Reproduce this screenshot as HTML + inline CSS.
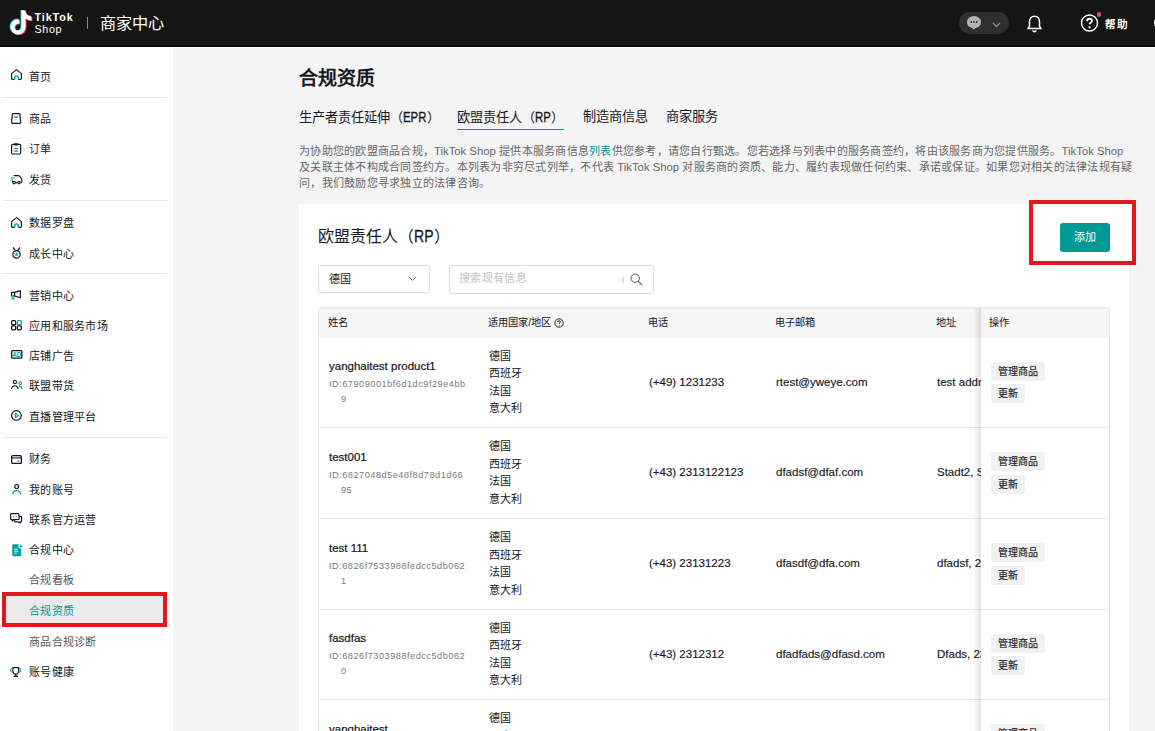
<!DOCTYPE html>
<html lang="zh-CN"><head><meta charset="utf-8">
<style>
*{box-sizing:border-box;margin:0;padding:0}
html,body{width:1155px;height:731px;overflow:hidden;background:#f4f4f4;font-family:"Liberation Sans",sans-serif;color:#161823}
.abs{position:absolute;white-space:nowrap}
.tab{top:107.8px;font-size:13.2px;line-height:18px;color:#161823;font-weight:500}
.tab b{font-weight:normal;display:inline-block;font-size:14px;-webkit-text-stroke:.35px #161823;transform:scaleX(.81);transform-origin:0 50%}
.tab b.e{margin-right:-5.3px}
.tab b.r{margin-right:-3.6px}
.lat{letter-spacing:0;font-size:11.3px}
.hdr{position:absolute;left:0;top:0;width:1155px;height:47px;background:#151515;border-bottom:1px solid #000}
.side{position:absolute;left:0;top:47px;width:173px;height:684px;background:#fff}
.wstrip{position:absolute;left:173px;top:47px;width:982px;height:1px;background:#fff}
.si{position:absolute;left:29px;font-size:11px;letter-spacing:.3px;line-height:14px;color:#161823;white-space:nowrap;font-weight:500}
.sub{color:#555}
.ic{position:absolute;left:10px;width:12px;height:12px}
.dv{position:absolute;left:3px;width:164px;height:1px;background:#e6e6e6}
.card{position:absolute;left:299px;top:204px;width:830px;height:540px;background:#fff;border-radius:2px}
.th{position:absolute;top:0;margin-left:-.7px;font-size:10.2px;line-height:30px;color:#161823;white-space:nowrap;font-weight:500}
.row{position:absolute;left:0;width:662px;height:91px;border-bottom:1px solid #e8e8e8}
.fx{position:absolute;left:662px;width:130px;background:#fff;border-bottom:1px solid #e8e8e8}
.fx .btn{left:10px}
.med{-webkit-text-stroke:.25px currentColor}
.nm{position:absolute;left:10px;font-size:11.5px;line-height:16px;color:#161823;white-space:nowrap;-webkit-text-stroke:.22px #161823}
.id{position:absolute;left:10px;font-size:9.2px;letter-spacing:.5px;color:#7a7a7a;white-space:nowrap;line-height:14px}
.ct{position:absolute;left:170px;font-size:11px;line-height:17.5px;color:#161823;font-weight:500}
.tx{position:absolute;font-size:11.5px;line-height:16px;color:#161823;white-space:nowrap;-webkit-text-stroke:.15px #161823}
.btn{position:absolute;height:19px;background:#f1f1f2;border-radius:3px;font-size:10px;line-height:19px;padding:0 6.8px;color:#161823;white-space:nowrap;font-weight:500;-webkit-text-stroke:.15px #161823}
</style></head><body>
<!-- HEADER -->
<div class="hdr">
  <svg class="abs" style="left:9px;top:10px" width="24" height="25" viewBox="0 0 24 24">
    <path fill="#25f4ee" transform="translate(-0.9,-0.6)" d="M12.525.02c1.31-.02 2.61-.01 3.91-.02.08 1.53.63 3.090 1.75 4.17 1.12 1.11 2.7 1.62 4.24 1.79v4.03c-1.44-.05-2.890-.35-4.2-.97-.57-.26-1.1-.59-1.62-.93-.01 2.92.01 5.84-.02 8.75-.08 1.4-.54 2.79-1.35 3.94-1.31 1.92-3.58 3.17-5.91 3.21-1.43.08-2.86-.31-4.08-1.03-2.02-1.19-3.44-3.37-3.65-5.71-.02-.5-.03-1-.01-1.49.18-1.9 1.12-3.72 2.58-4.96 1.66-1.44 3.98-2.13 6.15-1.72.02 1.48-.04 2.96-.04 4.44-.99-.32-2.15-.23-3.02.37-.63.41-1.11 1.04-1.36 1.75-.21.51-.15 1.07-.14 1.610.24 1.64 1.82 3.02 3.5 2.87 1.12-.01 2.19-.66 2.77-1.61.19-.33.4-.67.41-1.06.1-1.79.06-3.570.07-5.36.01-4.03-.01-8.05.02-12.07z"/>
    <path fill="#fe2c55" transform="translate(0.9,0.7)" d="M12.525.02c1.31-.02 2.61-.01 3.91-.02.08 1.53.63 3.090 1.75 4.17 1.12 1.11 2.7 1.62 4.24 1.79v4.03c-1.44-.05-2.890-.35-4.2-.97-.57-.26-1.1-.59-1.62-.93-.01 2.92.01 5.84-.02 8.75-.08 1.4-.54 2.79-1.35 3.940-1.31 1.92-3.58 3.17-5.91 3.21-1.43.08-2.86-.31-4.08-1.03-2.02-1.19-3.44-3.37-3.65-5.71-.02-.5-.03-1-.01-1.49.18-1.9 1.12-3.72 2.58-4.96 1.66-1.44 3.98-2.13 6.15-1.72.02 1.48-.04 2.96-.04 4.44-.99-.32-2.15-.23-3.02.37-.63.41-1.11 1.04-1.36 1.75-.21.51-.15 1.07-.14 1.61.24 1.64 1.82 3.02 3.5 2.87 1.12-.01 2.19-.66 2.77-1.61.19-.33.4-.67.41-1.06.1-1.79.06-3.57.07-5.36.01-4.03-.01-8.05.02-12.07z"/>
    <path fill="#fff" d="M12.525.02c1.31-.02 2.61-.01 3.91-.02.08 1.53.63 3.09 1.75 4.17 1.12 1.11 2.7 1.62 4.24 1.79v4.03c-1.44-.05-2.89-.35-4.2-.97-.57-.26-1.1-.59-1.62-.93-.01 2.92.01 5.84-.02 8.75-.08 1.4-.54 2.79-1.35 3.94-1.31 1.92-3.58 3.17-5.91 3.21-1.43.08-2.86-.31-4.08-1.03-2.02-1.19-3.44-3.37-3.65-5.71-.02-.5-.03-1-.01-1.49.18-1.9 1.12-3.72 2.58-4.96 1.66-1.44 3.98-2.130 6.15-1.72.02 1.48-.04 2.96-.04 4.44-.99-.32-2.15-.23-3.02.37-.63.41-1.11 1.04-1.36 1.75-.21.51-.15 1.07-.14 1.61.24 1.64 1.82 3.02 3.5 2.87 1.12-.01 2.19-.66 2.77-1.61.19-.33.4-.67.41-1.06.1-1.79.06-3.57.07-5.36.01-4.03-.01-8.05.02-12.07z"/>
  </svg>
  <div class="abs" style="left:34.5px;top:11px;font-size:10.8px;font-weight:bold;color:#fff;line-height:12px;letter-spacing:0.9px">TikTok</div>
  <div class="abs" style="left:34.5px;top:22.5px;font-size:10.8px;color:#fff;line-height:12px;letter-spacing:0.6px">Shop</div>
  <div class="abs" style="left:87px;top:17px;width:1px;height:12px;background:#8a8a8a"></div>
  <div class="abs" style="left:100px;top:13px;font-size:16.2px;line-height:20px;color:#fff">商家中心</div>
  <!-- right -->
  <div class="abs" style="left:959px;top:12px;width:50px;height:22px;border-radius:11px;background:#2f2f2f"></div>
  <svg class="abs" style="left:966px;top:15px" width="16" height="16" viewBox="0 0 16 16">
    <ellipse cx="8" cy="7.2" rx="7" ry="6.2" fill="#b4b4b4"/><path d="M6.5 12.5l1 2.4 2.5-2.6z" fill="#b4b4b4"/>
    <circle cx="5.2" cy="7" r=".9" fill="#2f2f2f"/><circle cx="8" cy="7" r=".9" fill="#2f2f2f"/><circle cx="10.8" cy="7" r=".9" fill="#2f2f2f"/>
  </svg>
  <svg class="abs" style="left:992px;top:22px" width="9" height="6" viewBox="0 0 9 6"><path d="M1 1l3.5 3.5L8 1" stroke="#9a9a9a" stroke-width="1.1" fill="none"/></svg>
  <svg class="abs" style="left:1025px;top:14px" width="19" height="20" viewBox="0 0 19 20">
    <path d="M9.5 2.2c-3 0-5 2.3-5 5.3v4.8l-1.6 2.3h13.2l-1.6-2.3V7.5c0-3-2-5.3-5-5.3z" stroke="#fff" stroke-width="1.5" fill="none" stroke-linejoin="round"/>
    <path d="M7 16.6c.2 1.1 1.2 1.9 2.5 1.9s2.3-.8 2.5-1.9z" fill="#fff"/>
  </svg>
  <svg class="abs" style="left:1080px;top:12.5px" width="20" height="20" viewBox="0 0 20 20">
    <circle cx="9.5" cy="10" r="8" stroke="#fff" stroke-width="1.4" fill="none"/>
    <path d="M7.1 8.2c0-1.5 1.1-2.5 2.4-2.5s2.4.9 2.4 2.2c0 1.8-2.4 1.8-2.4 3.4" stroke="#fff" stroke-width="1.9" fill="none"/>
    <circle cx="9.5" cy="14.3" r="1.15" fill="#fff"/>
  </svg>
  <div class="abs" style="left:1096.9px;top:12px;width:4.2px;height:4.9px;border-radius:2.3px;background:#ea4a5e"></div>
  <div class="abs" style="left:1105px;top:16.8px;font-size:10.6px;letter-spacing:.7px;line-height:14px;color:#fff;font-weight:bold">帮助</div>
  <div class="abs" style="left:1153.5px;top:14px;width:18px;height:18px;border-radius:9px;background:#fff"></div>
</div>

<!-- SIDEBAR -->
<div class="side"></div><div class="wstrip"></div>
<div class="dv" style="top:96.9px"></div>
<div class="dv" style="top:199.9px"></div>
<div class="dv" style="top:273.0px"></div>
<div class="dv" style="top:436.8px"></div>
<svg class="abs" style="left:11px;top:69px;overflow:visible" width="11" height="11" viewBox="0 0 11 11"><path d="M3.6 10.4H1.4a.8.8 0 01-.8-.8V4.6L5.5.6l4.9 4v5a.8.8 0 01-.8.8H7.4" stroke="#161823" stroke-width="1.2" fill="none" stroke-linejoin="round"/><path d="M3.7 10.8V8.7a1.8 1.8 0 013.6 0v2.1" stroke="#00a3a0" stroke-width="1.4" fill="none"/></svg>
<div class="si" style="top:69.5px">首页</div>
<svg class="abs" style="left:11px;top:113px;overflow:visible" width="10.3" height="10.5" viewBox="0 0 10.3 10.5"><path d="M2 .6h6.3a.6.6 0 01.6.5l.8 8.4a.9.9 0 01-.9.9H1.5a.9.9 0 01-.9-.9l.8-8.4a.6.6 0 01.6-.5z" stroke="#161823" stroke-width="1.2" fill="none"/><path d="M3.3 2.9c.4 1 1.1 1.5 1.85 1.5s1.45-.5 1.85-1.5" stroke="#00a3a0" stroke-width="1.2" fill="none"/></svg>
<div class="si" style="top:111.5px">商品</div>
<svg class="abs" style="left:11px;top:143.4px;overflow:visible" width="10.3" height="11.6" viewBox="0 0 10.3 11.6"><rect x=".6" y="1.4" width="9.1" height="9.6" rx="1.3" stroke="#161823" stroke-width="1.2" fill="none"/><rect x="3" y=".3" width="4.3" height="2.2" rx="1" fill="#161823"/><path d="M3.2 5.6h3.9M3.2 8.1h3.9" stroke="#00a3a0" stroke-width="1.1"/></svg>
<div class="si" style="top:142.0px">订单</div>
<svg class="abs" style="left:9.7px;top:174.5px;overflow:visible" width="12.5" height="9.3" viewBox="0 0 12.5 9.3"><path d="M3.6 .6H8.4a1.5 1.5 0 011.2.6l1.9 2.5a1.5 1.5 0 01.3.9V7a.6.6 0 01-.6.6h-.6M7.6 7.6H5.4M2.7 7.6V5.8" stroke="#161823" stroke-width="1.1" fill="none" stroke-linejoin="round"/><circle cx="4.1" cy="7.6" r="1.25" stroke="#161823" stroke-width="1.1" fill="#fff"/><circle cx="9" cy="7.6" r="1.25" stroke="#161823" stroke-width="1.1" fill="#fff"/><path d="M1 3h3.8M.3 5h3" stroke="#00a3a0" stroke-width="1.1"/></svg>
<div class="si" style="top:172.5px">发货</div>
<svg class="abs" style="left:11px;top:217px;overflow:visible" width="11" height="11" viewBox="0 0 11 11"><path d="M3.6 10.4H1.4a.8.8 0 01-.8-.8V4.6L5.5.6l4.9 4v5a.8.8 0 01-.8.8H7.4" stroke="#161823" stroke-width="1.2" fill="none" stroke-linejoin="round"/><path d="M3.7 10.8V8.7a1.8 1.8 0 013.6 0v2.1" stroke="#00a3a0" stroke-width="1.4" fill="none"/></svg>
<div class="si" style="top:216.0px">数据罗盘</div>
<svg class="abs" style="left:12px;top:246.5px;overflow:visible" width="9" height="11.7" viewBox="0 0 9 11.7"><path d="M1 .4l2 2.8M8 .4L6 3.2" stroke="#161823" stroke-width="1.2"/><circle cx="4.5" cy="7.4" r="3.7" stroke="#161823" stroke-width="1.2" fill="none"/><path d="M4.5 4.9L5.15 6.5L6.85 6.6L5.5 7.7L5.95 9.4L4.5 8.45L3.05 9.4L3.5 7.7L2.15 6.6L3.85 6.5Z" fill="#00a3a0"/></svg>
<div class="si" style="top:246.5px">成长中心</div>
<svg class="abs" style="left:11px;top:290px;overflow:visible" width="10" height="9.7" viewBox="0 0 10 9.7"><path d="M.6 2.4h3v3.6h-3z" stroke="#161823" stroke-width="1.2" fill="none" stroke-linejoin="round"/><path d="M3.6 2.4L9.4.6v7.2L3.6 6" stroke="#161823" stroke-width="1.2" fill="none" stroke-linejoin="round"/><path d="M1.3 6.2v2.3a.85.85 0 001.7 0V6.2" stroke="#00a3a0" stroke-width="1.1" fill="none"/></svg>
<div class="si" style="top:288.5px">营销中心</div>
<svg class="abs" style="left:11px;top:320px;overflow:visible" width="11" height="10.5" viewBox="0 0 11 10.5"><rect x=".65" y=".65" width="4" height="4" rx="1" stroke="#161823" stroke-width="1.3" fill="none"/><rect x="6.35" y=".65" width="4" height="4" rx="1" stroke="#00a3a0" stroke-width="1.3" fill="none"/><rect x=".65" y="5.85" width="4" height="4" rx="1" stroke="#161823" stroke-width="1.3" fill="none"/><rect x="6.35" y="5.85" width="4" height="4" rx="1" stroke="#161823" stroke-width="1.3" fill="none"/></svg>
<div class="si" style="top:318.5px">应用和服务市场</div>
<svg class="abs" style="left:10.5px;top:350px;overflow:visible" width="11.5" height="8.8" viewBox="0 0 11.5 8.8"><rect x=".65" y=".65" width="10.2" height="7.5" rx=".9" stroke="#161823" stroke-width="1.3" fill="none"/><text x="5.75" y="6.7" font-size="6.3" font-family="Liberation Sans" font-weight="bold" text-anchor="middle" fill="#00a3a0">AD</text></svg>
<div class="si" style="top:348.8px">店铺广告</div>
<svg class="abs" style="left:10.5px;top:380px;overflow:visible" width="11.5" height="9.5" viewBox="0 0 11.5 9.5"><circle cx="3.9" cy="2.1" r="1.65" stroke="#161823" stroke-width="1.1" fill="none"/><path d="M.5 9c.4-2.1 1.7-3.3 3.4-3.3S6.9 6.9 7.3 9" stroke="#161823" stroke-width="1.1" fill="none"/><circle cx="9.3" cy="3.1" r="1.4" stroke="#00a3a0" stroke-width="1.1" fill="none"/><path d="M8 5.9c1.6.1 2.6 1.2 3 3" stroke="#00a3a0" stroke-width="1.1" fill="none"/></svg>
<div class="si" style="top:379.1px">联盟带货</div>
<svg class="abs" style="left:10.5px;top:409.6px;overflow:visible" width="10.8" height="10.9" viewBox="0 0 10.8 10.9"><circle cx="5.4" cy="5.45" r="4.8" stroke="#161823" stroke-width="1.2" fill="none"/><path d="M4.3 3.3v4.3l3.1-2.15z" stroke="#00a3a0" stroke-width="1.1" fill="none" stroke-linejoin="round"/></svg>
<div class="si" style="top:409.5px">直播管理平台</div>
<svg class="abs" style="left:11px;top:454.8px;overflow:visible" width="11" height="9" viewBox="0 0 11 9"><rect x=".65" y=".65" width="9.7" height="7.7" rx="1.2" stroke="#161823" stroke-width="1.3" fill="none"/><path d="M1 2.9h9" stroke="#161823" stroke-width="1.1"/><path d="M6.2 6.1h2.1" stroke="#00a3a0" stroke-width="1.2"/></svg>
<div class="si" style="top:452.2px">财务</div>
<svg class="abs" style="left:11.8px;top:484px;overflow:visible" width="9.4" height="11" viewBox="0 0 9.4 11"><circle cx="4.7" cy="2.6" r="2" stroke="#161823" stroke-width="1.2" fill="none"/><path d="M.6 10.4c.6-2.4 2.1-3.7 4.1-3.7s3.5 1.3 4.1 3.7" stroke="#00a3a0" stroke-width="1.2" fill="none"/></svg>
<div class="si" style="top:482.5px">我的账号</div>
<svg class="abs" style="left:10px;top:513px;overflow:visible" width="12.2" height="10" viewBox="0 0 12.2 10"><path d="M1.4.6h6.9a.8.8 0 01.8.8v4.3a.8.8 0 01-.8.8H4L2.2 8V6.5h-.8a.8.8 0 01-.8-.8V1.4a.8.8 0 01.8-.8z" stroke="#161823" stroke-width="1.2" fill="none" stroke-linejoin="round"/><path d="M9.1 3.3h1.7a.8.8 0 01.8.8v4a.8.8 0 01-.8.8h-.6v1l-1.6-1H5.4a.8.8 0 01-.8-.8V6.5" stroke="#161823" stroke-width="1.2" fill="none" stroke-linejoin="round"/><path d="M3 3.3h4.2" stroke="#00a3a0" stroke-width="1" stroke-dasharray=".9 .55"/></svg>
<div class="si" style="top:513.0px">联系官方运营</div>
<svg class="abs" style="left:11.5px;top:544px;overflow:visible" width="10.7" height="12.3" viewBox="0 0 10.7 12.3"><path d="M1.4.3h5.6L9.3 2.6v8.4a1.2 1.2 0 01-1.2 1.2H1.4A1.2 1.2 0 01.2 11V1.5A1.2 1.2 0 011.4.3z" fill="#00a3a0"/><circle cx="8.9" cy="2.3" r="2.5" fill="#fff"/><path d="M8.9.1l.6 1.6 1.6.6-1.6.6-.6 1.6-.6-1.6-1.6-.6 1.6-.6z" fill="#00a3a0"/><path d="M2.1 5.2h3.6M2.1 7.2h4.2M2.1 9.2h2.6" stroke="#fff" stroke-width="1" opacity=".85"/></svg>
<div class="si" style="top:543.3px">合规中心</div>
<div class="si sub" style="top:573.4px">合规看板</div>
<div class="abs" style="left:3px;top:594px;width:162px;height:31px;background:#eaeaea"></div>
<div class="si" style="top:603.6px;color:#009995">合规资质</div>
<div class="si sub" style="top:634.7px">商品合规诊断</div>
<svg class="abs" style="left:10.3px;top:667px;overflow:visible" width="11.5" height="10" viewBox="0 0 11.5 10"><path d="M2.9.6h5.7v3.7a2.85 2.85 0 01-5.7 0z" stroke="#161823" stroke-width="1.2" fill="none"/><path d="M2.4 1.2C1.2 1.4.6 2.2.6 3.2s.6 1.8 1.8 2M9.1 1.2c1.2.2 1.8 1 1.8 2s-.6 1.8-1.8 2" stroke="#00a3a0" stroke-width="1.1" fill="none"/><path d="M5.75 7v1.8" stroke="#161823" stroke-width="1.2"/><path d="M4 9.2h3.5" stroke="#161823" stroke-width="1.4" stroke-linecap="round"/></svg>
<div class="si" style="top:664.5px">账号健康</div>
<div class="abs" style="left:1.6px;top:592px;width:165.5px;height:34.6px;border:4px solid #e3171c"></div>

<!-- MAIN -->
<div class="abs" style="left:299px;top:67px;font-size:19px;line-height:24px;font-weight:bold;color:#161823">合规资质</div>
<div class="abs tab" style="left:299px">生产者责任延伸（<b class="e">EPR</b>）</div>
<div class="abs tab" style="left:457px">欧盟责任人（<b class="r">RP</b>）</div>
<div class="abs" style="left:457px;top:128.6px;width:107px;height:1.7px;background:#009995"></div>
<div class="abs tab" style="left:583px">制造商信息</div>
<div class="abs tab" style="left:666px">商家服务</div>
<div class="abs" style="left:299px;top:143px;font-size:11px;letter-spacing:.25px;line-height:16px;color:#666">为协助您的欧盟商品合规，<span class="lat">TikTok Shop</span> 提供本服务商信息<span style="color:#009995">列表</span>供您参考，请您自行甄选。您若选择与列表中的服务商签约，将由该服务商为您提供服务。<span class="lat">TikTok Shop</span><br>及关联主体不构成合同签约方。本列表为非穷尽式列举，不代表 <span class="lat">TikTok Shop</span> 对服务商的资质、能力、履约表现做任何约束、承诺或保证。如果您对相关的法律法规有疑<br>问，我们鼓励您寻求独立的法律咨询。</div>

<div class="card">
  <div class="abs" style="left:19px;top:22px;font-size:16px;line-height:20px;color:#161823;font-weight:500">欧盟责任人（<b style="font-weight:normal;display:inline-block;-webkit-text-stroke:.3px #161823;transform:scaleX(.85);transform-origin:0 50%;margin-right:-3.3px;font-size:16.5px">RP</b>）</div>
  <div class="abs" style="left:730px;top:-4px;width:107.3px;height:64.5px;border:4px solid #e3171c;background:#fff"></div>
  <div class="abs" style="left:761px;top:19px;width:50px;height:29px;background:#009995;border-radius:3px;color:#fff;font-size:11px;line-height:29px;text-align:center;font-weight:500">添加</div>
  <!-- select -->
  <div class="abs" style="left:19px;top:61px;width:112px;height:28px;border:1px solid #dcdcdc;border-radius:3px;background:#fff"></div>
  <div class="abs" style="left:30px;top:68px;font-size:11px;line-height:14px;color:#161823;font-weight:500">德国</div>
  <svg class="abs" style="left:109px;top:72px" width="9" height="6" viewBox="0 0 9 6"><path d="M1 1l3.5 3.5L8 1" stroke="#777" stroke-width="1" fill="none"/></svg>
  <!-- search -->
  <div class="abs" style="left:150px;top:61px;width:205px;height:29px;border:1px solid #dcdcdc;border-radius:3px;background:#fff"></div>
  <div class="abs" style="left:160px;top:67px;font-size:11px;letter-spacing:.35px;line-height:14px;color:#c2c2c2">搜索现有信息</div>
  <div class="abs" style="left:324px;top:73px;width:1px;height:6px;background:#ccc"></div>
  <svg class="abs" style="left:331px;top:69px" width="13" height="13" viewBox="0 0 13 13"><circle cx="5.2" cy="5.2" r="4.2" stroke="#555" stroke-width="1" fill="none"/><path d="M8.3 8.3l3.4 3.4" stroke="#555" stroke-width="1.1" stroke-linecap="round"/></svg>
  <!-- table -->
  <div id="tbl" class="abs" style="left:19px;top:103px;width:792px;height:440px;overflow:hidden;border:1px solid #e8e8e8;border-bottom:none;border-radius:3px 3px 0 0">
    <div class="abs" style="left:0;top:0;width:792px;height:30px;background:#f5f5f5"></div>
    <div class="th" style="left:10px">姓名</div>
    <div class="th" style="left:170px">适用国家/地区</div>
    <svg class="abs" style="left:235px;top:10px" width="10" height="10" viewBox="0 0 10 10"><circle cx="5" cy="5" r="4.2" stroke="#161823" stroke-width=".9" fill="none"/><path d="M3.6 4c0-.8.6-1.3 1.4-1.3s1.4.5 1.4 1.2c0 .9-1.3 1-1.3 2" stroke="#161823" stroke-width=".9" fill="none"/><circle cx="5.1" cy="7.3" r=".5" fill="#161823"/></svg>
    <div class="th" style="left:330px">电话</div>
    <div class="th" style="left:457px">电子邮箱</div>
    <div class="th" style="left:618px">地址</div>
    <div class="row" style="top:30px;height:90px">
<div class="nm" style="top:20.3px">yanghaitest product1</div>
<div class="id" style="top:39.0px">ID:67909001bf6d1dc9f29e4bb</div>
<div class="id" style="top:54.1px;left:22px">9</div>
<div class="ct" style="top:9.700000000000003px">德国<br>西班牙<br>法国<br>意大利</div>
<div class="tx" style="left:330px;top:35.5px">(+49) 1231233</div>
<div class="tx" style="left:457px;top:35.5px">rtest@yweye.com</div>
<div class="tx" style="left:618px;top:35.5px">test address</div>
</div>
<div class="fx" style="top:30px;height:90px">
<div class="btn" style="top:23.8px">管理商品</div>
<div class="btn" style="top:46.0px">更新</div>
</div>
<div class="row" style="top:120px;height:91px">
<div class="nm" style="top:20.8px">test001</div>
<div class="id" style="top:39.5px">ID:6827048d5e48f8d78d1d66</div>
<div class="id" style="top:54.6px;left:22px">95</div>
<div class="ct" style="top:10.200000000000003px">德国<br>西班牙<br>法国<br>意大利</div>
<div class="tx" style="left:330px;top:36.0px">(+43) 2313122123</div>
<div class="tx" style="left:457px;top:36.0px">dfadsf@dfaf.com</div>
<div class="tx" style="left:618px;top:36.0px">Stadt2, Str</div>
</div>
<div class="fx" style="top:120px;height:91px">
<div class="btn" style="top:24.3px">管理商品</div>
<div class="btn" style="top:46.5px">更新</div>
</div>
<div class="row" style="top:211px;height:91px">
<div class="nm" style="top:20.8px">test 111</div>
<div class="id" style="top:39.5px">ID:6826f7533988fedcc5db062</div>
<div class="id" style="top:54.6px;left:22px">1</div>
<div class="ct" style="top:10.200000000000003px">德国<br>西班牙<br>法国<br>意大利</div>
<div class="tx" style="left:330px;top:36.0px">(+43) 23131223</div>
<div class="tx" style="left:457px;top:36.0px">dfasdf@dfa.com</div>
<div class="tx" style="left:618px;top:36.0px">dfadsf, 23</div>
</div>
<div class="fx" style="top:211px;height:91px">
<div class="btn" style="top:24.3px">管理商品</div>
<div class="btn" style="top:46.5px">更新</div>
</div>
<div class="row" style="top:302px;height:90px">
<div class="nm" style="top:20.3px">fasdfas</div>
<div class="id" style="top:39.0px">ID:6826f7303988fedcc5db062</div>
<div class="id" style="top:54.1px;left:22px">0</div>
<div class="ct" style="top:9.700000000000003px">德国<br>西班牙<br>法国<br>意大利</div>
<div class="tx" style="left:330px;top:35.5px">(+43) 2312312</div>
<div class="tx" style="left:457px;top:35.5px">dfadfads@dfasd.com</div>
<div class="tx" style="left:618px;top:35.5px">Dfads, 23</div>
</div>
<div class="fx" style="top:302px;height:90px">
<div class="btn" style="top:23.8px">管理商品</div>
<div class="btn" style="top:46.0px">更新</div>
</div>
<div class="row" style="top:392px;height:91px">
<div class="nm" style="top:20.8px">yanghaitest</div>
<div class="id" style="top:39.5px">ID:67909001bf6d1dc9f29e4bb</div>
<div class="id" style="top:54.6px;left:22px">9</div>
<div class="ct" style="top:10.200000000000003px">德国<br>西班牙<br>法国<br>意大利</div>
<div class="tx" style="left:330px;top:36.0px">(+49) 1231233</div>
<div class="tx" style="left:457px;top:36.0px">rtest@yweye.com</div>
<div class="tx" style="left:618px;top:36.0px">test address</div>
</div>
<div class="fx" style="top:392px;height:91px">
<div class="btn" style="top:24.3px">管理商品</div>
<div class="btn" style="top:46.5px">更新</div>
</div>
    <div class="abs" style="left:654px;top:0;width:8px;height:440px;background:linear-gradient(to right,rgba(0,0,0,0),rgba(0,0,0,0.11))"></div>
    <div class="abs" style="left:662px;top:0;width:130px;height:30px;background:#f5f5f5"></div>
    <div class="th" style="left:671px">操作</div>
  </div>
</div>

<!-- red annotation -->

</body></html>
